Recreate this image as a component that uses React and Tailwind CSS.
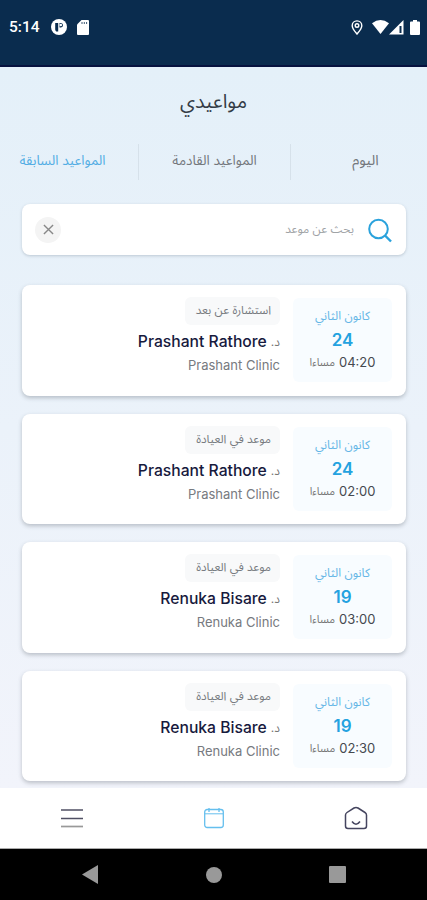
const appointments = [
  { id: 1, day: "24", time: "04:20", type: "استشارة عن بعد", doctor: "Prashant Rathore", clinic: "Prashant Clinic" },
  { id: 2, day: "24", time: "02:00", type: "موعد في العيادة", doctor: "Prashant Rathore", clinic: "Prashant Clinic" },
  { id: 3, day: "19", time: "03:00", type: "موعد في العيادة", doctor: "Renuka Bisare", clinic: "Renuka Clinic" },
  { id: 4, day: "19", time: "02:30", type: "موعد في العيادة", doctor: "Renuka Bisare", clinic: "Renuka Clinic" },
];

function StatusBar() {
  return (
    <header dir="ltr" className="flex h-[67px] shrink-0 items-start justify-between border-b-2 border-[#06123f] bg-[#0a2c4e] pt-[18px] pr-[7px] pl-[9px] text-white">
      <div className="flex h-5 items-center">
        <span className="w-[42px] font-['Roboto',sans-serif] text-[15.5px] font-medium">5:14</span>
        <svg className="-mt-0.5" width="16" height="16" viewBox="0 0 16 16">
          <circle cx="8" cy="8" r="8" fill="currentColor" />
          <path d="M4.200 4h3v8.500h-2q-1-1-1-2zM8.500 4H10q2 .5 2 2.200T10 8.500H8.500z" fill="#0a2c4e" />
          <circle cx="9.800" cy="6" r="1.300" fill="currentColor" />
        </svg>
        <svg className="-mt-0.5 ml-[10px]" width="12" height="15" viewBox="0 0 12 15">
          <path d="M4.500 0H11q1 0 1 1v13q0 1-1 1H1q-1 0-1-1V4.500z" fill="currentColor" />
          <path d="M5 2v2M7.300 2v2M9.600 2v2" stroke="#0a2c4e" strokeWidth=".8" />
        </svg>
      </div>

      <div className="-mt-px flex h-5 items-center">
        <svg width="12" height="15" viewBox="0 0 12 15" fill="none" stroke="currentColor">
          <path d="M6 14C3.500 11 1.200 8.500 1.200 5.700a4.800 4.800 0 0 1 9.600 0C10.800 8.500 8.500 11 6 14z" strokeWidth="1.400" />
          <circle cx="6" cy="5.500" r="1.800" strokeWidth="1.400" />
        </svg>
        <svg className="ml-[9px]" width="17" height="14" viewBox="0 0 17 14" fill="currentColor">
          <path d="M8.500 14L0 3.300Q8.500-3.200 17 3.300z" />
        </svg>
        <svg width="15" height="15" viewBox="0 0 15 15">
          <path d="M14.500 0v14.500H0z" fill="currentColor" />
          <path d="M10.500 6h2v7h-2z" fill="#0a2c4e" />
        </svg>
        <svg className="ml-[6px]" width="10" height="15" viewBox="0 0 10 15" fill="currentColor">
          <path d="M3 0h4v1.500h2q1 0 1 1V14q0 1-1 1H1q-1 0-1-1V2.500q0-1 1-1h2z" />
        </svg>
      </div>
    </header>
  );
}

function Tabs() {
  return (
    <nav className="mt-[28px] flex h-9 items-center text-[13.5px] text-[#73777c]">
      <button className="h-9 w-[137px] border-l border-[#d6e1ea] pb-1 pl-[13px] text-[14.5px]">اليوم</button>
      <button className="h-9 w-[152px] border-l border-[#d6e1ea] pb-1">المواعيد القادمة</button>
      <button className="h-9 w-[138px] pr-[13px] pb-1 text-[#53ade4]">المواعيد السابقة</button>
    </nav>
  );
}

function SearchBar() {
  return (
    <div className="mx-[21px] mt-[24px] flex h-[51px] w-[384px] items-center rounded-lg bg-white pr-[14px] pl-[13px] shadow-[0_1px_3px_rgba(60,80,100,0.25)]">
      <svg width="26" height="26" viewBox="0 0 26 26" fill="none" stroke="#2aa2dc" strokeWidth="2">
        <circle cx="12.500" cy="12" r="9.300" />
        <path d="M19 18.500L25 24.500" strokeWidth="2.400" />
      </svg>
      <span className="mr-[12px] text-[11.8px] text-[#a0a3a6]">بحث عن موعد</span>
      <button className="mr-auto flex h-[26px] w-[26px] items-center justify-center rounded-full bg-[#f4f4f4]">
        <svg width="11" height="11" viewBox="0 0 12 12" stroke="#888" strokeWidth="1.500">
          <path d="M1 1l10 10M11 1L1 11" />
        </svg>
      </button>
    </div>
  );
}

function AppointmentCard({ item }) {
  return (
    <article className="flex h-[110.500px] w-[384px] shrink-0 rounded-lg bg-white pr-[14px] shadow-[0_2px_4px_rgba(60,70,80,0.3)]">
      <div className="mt-[13px] flex h-[84px] w-[99px] flex-col items-center rounded-md bg-[#f8fcff]">
        <span className="mt-[9px] h-[18px] text-[12px] leading-[18px] text-[#65b6e6]">كانون الثاني</span>
        <span className="mt-[3px] h-6 text-[17px] leading-6 font-semibold text-[#24a2e0]">{item.day}</span>
        <span className="flex h-5 items-center gap-1 text-[13px] leading-5 text-[#45494f]">
          <span>{item.time}</span>
          <span className="text-[11px] text-[#777]">مساءا</span>
        </span>
      </div>

      <div className="mr-[13px] flex flex-col items-start pt-[12px]">
        <span className="flex h-[28px] items-center rounded-md bg-[#f8f9fa] pr-[9px] pl-[11px] text-[11.8px] text-[#777b80]">{item.type}</span>
        <h2 className="mt-[5px] flex h-6 items-center gap-1 text-[15.7px] font-medium text-[#171a3d]">
          <span className="text-[12px] font-normal text-[#777]">د.</span>
          <span>{item.doctor}</span>
        </h2>
        <p className="h-6 text-[13px] leading-[23px] text-[#777a80]">{item.clinic}</p>
      </div>
    </article>
  );
}

function BottomNav() {
  return (
    <nav className="flex h-[61px] shrink-0 items-center justify-between border-b border-[#aaa] bg-white pr-[59px] pl-[61px]">
      <button>
        <svg width="24" height="24" viewBox="0 0 24 24" fill="none" stroke="#45455f" strokeWidth="1.500" strokeLinejoin="round">
          <path d="M1.500 9Q1.500 7.500 3 6.500L10 2Q12 .8 14 2L21 6.500Q22.500 7.500 22.500 9V20q0 2.500-2.500 2.500H4Q1.500 22.500 1.500 20z" />
          <path d="M8 15.500q4 5.500 8 0" />
        </svg>
      </button>
      <button>
        <svg width="20" height="22" viewBox="0 0 20 22" fill="none" stroke="#65bfee" strokeWidth="1.300">
          <rect x=".7" y="2.500" width="18.600" height="18" rx="2.500" />
          <path d="M1 6.800h18" strokeWidth="1" />
          <path d="M5 1v4M15 1v4" />
        </svg>
      </button>
      <button>
        <svg width="22" height="22" viewBox="0 0 22 22" fill="none" strokeWidth="1.700">
          <path d="M0 3h22M0 11.500h22" stroke="#505064" />
          <path d="M0 19.500h22" stroke="#999" />
        </svg>
      </button>
    </nav>
  );
}

function SystemNav() {
  return (
    <footer dir="ltr" className="flex h-[51px] shrink-0 items-center justify-between bg-black pr-[81px] pl-[82px] text-[#999]">
      <svg width="16" height="20" viewBox="0 0 16 20" fill="currentColor">
        <path d="M16 0v19L0 9.500z" />
      </svg>
      <div className="h-4 w-4 rounded-full bg-[#999]" />
      <div className="h-[17px] w-[17px] rounded-[1px] bg-[#999]" />
    </footer>
  );
}

export default function App() {
  return (
    <div dir="rtl" className="flex h-[900px] w-[427px] flex-col overflow-hidden bg-white font-['Inter','Noto_Sans_Arabic','DejaVu_Sans',sans-serif]">
      <StatusBar />

      <main className="flex h-[721px] shrink-0 flex-col overflow-hidden bg-linear-to-b from-[#e4f0f9] to-[#f2f4fb]">
        <h1 className="mt-[19px] h-[30px] text-center text-[19.7px] leading-[30px] text-[#343c46]">مواعيدي</h1>
        <Tabs />
        <SearchBar />
        <section className="mx-[21px] mt-[30px] flex flex-col gap-[18px]">
          {appointments.map((item) => (
            <AppointmentCard key={item.id} item={item} />
          ))}
        </section>
      </main>

      <BottomNav />
      <SystemNav />
    </div>
  );
}
